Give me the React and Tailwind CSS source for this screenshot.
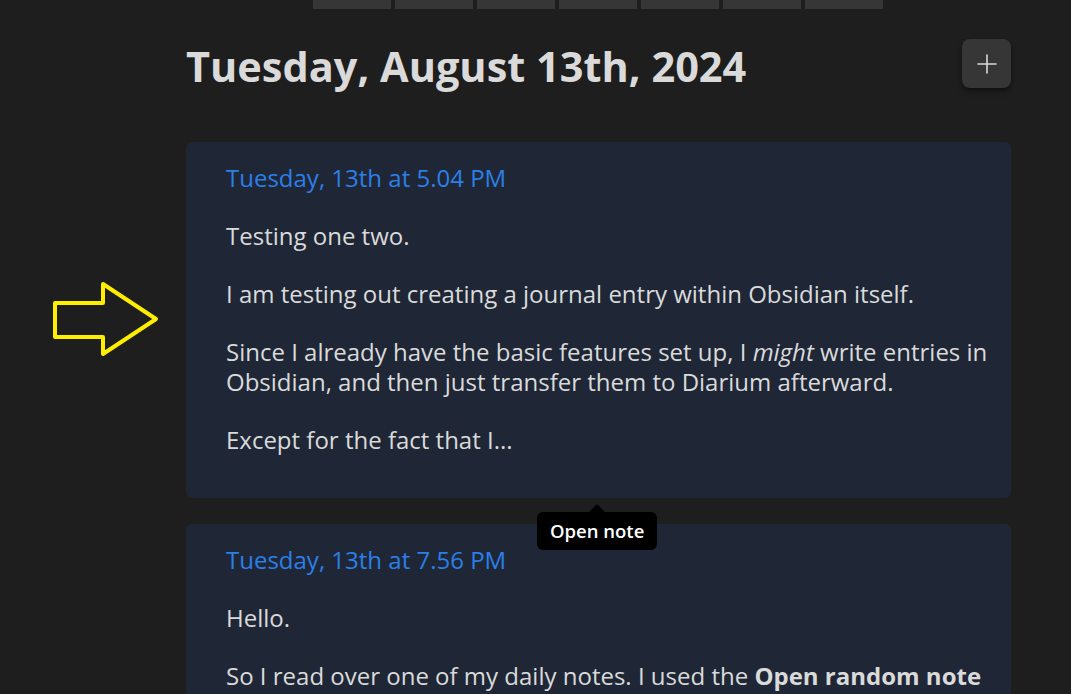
import React from 'react';

const tabs = [0, 1, 2, 3, 4, 5, 6];

const NoteCard = ({ stamp, children }) => (
    <div className="relative rounded-md bg-[#1f2737] pl-10 pr-3 pt-[21px] pb-[43px]">
        <div className="text-[24px] leading-[30px] text-[#2b7fe8]">{stamp}</div>
        <div className="mt-[28px] flex flex-col gap-[28px] text-[24px] leading-[30px] text-[#dadada]">
            {children}
        </div>
    </div>
);

export default function App() {
    return (
        <div
            className="relative h-[694px] w-[1071px] overflow-hidden bg-[#1e1e1e]"
            style={{ fontFamily: '"Open Sans", "Noto Sans", sans-serif' }}
        >
            {/* tab strip at the top */}
            <div className="flex justify-center gap-1 pl-[184px] pr-[60px]">
                {tabs.map((t) => (
                    <div key={t} className="h-[9px] w-[78px] bg-[#363636]" />
                ))}
            </div>

            <div className="ml-[186px] w-[825px]">
                {/* header */}
                <div className="mt-[30px] flex items-start justify-between">
                    <h1 className="text-[41.5px] font-bold leading-[54px] text-[#dadada]">
                        Tuesday, August 13th, 2024
                    </h1>
                    <button className="flex h-[49px] w-[49px] items-center justify-center rounded-lg bg-[#363636] shadow-md shadow-black/40">
                        <svg width="20" height="20" viewBox="0 0 20 20" fill="none" stroke="#d8d8d8" strokeWidth="1.6" strokeLinecap="round">
                            <path d="M10 1v18M1 10h18" />
                        </svg>
                    </button>
                </div>

                <div className="mt-[49px] flex flex-col gap-[26px]">
                    <NoteCard stamp="Tuesday, 13th at 5.04 PM">
                        <p>Testing one two.</p>
                        <p>I am testing out creating a journal entry within Obsidian itself.</p>
                        <p>
                            Since I already have the basic features set up, I <em>might</em> write entries in
                            Obsidian, and then just transfer them to Diarium afterward.
                        </p>
                        <p>Except for the fact that I...</p>

                        {/* tooltip hanging below the card */}
                        <div className="absolute bottom-[-52px] left-[351px] z-10 flex flex-col items-center">
                            <div className="h-0 w-0 border-x-[8px] border-b-[8px] border-x-transparent border-b-black" />
                            <div className="flex h-[38px] items-center rounded-md bg-black px-[13px] text-[18.5px] font-semibold text-white">
                                Open note
                            </div>
                        </div>
                    </NoteCard>

                    <NoteCard stamp="Tuesday, 13th at 7.56 PM">
                        <p>Hello.</p>
                        <p>
                            So I read over one of my daily notes. I used the <strong className="font-bold">Open random note</strong>{' '}
                            command to pick one, and it took me back to an entry from a while ago.
                        </p>
                    </NoteCard>
                </div>
            </div>

            {/* yellow annotation arrow */}
            <svg className="absolute left-[50px] top-[280px]" width="112" height="80" viewBox="0 0 112 80" fill="none">
                <path
                    d="M5 23 H53 V4 L106 39 L53 74 V57 H5 Z"
                    stroke="#ffee00"
                    strokeWidth="4"
                    strokeLinejoin="round"
                />
            </svg>
        </div>
    );
}
